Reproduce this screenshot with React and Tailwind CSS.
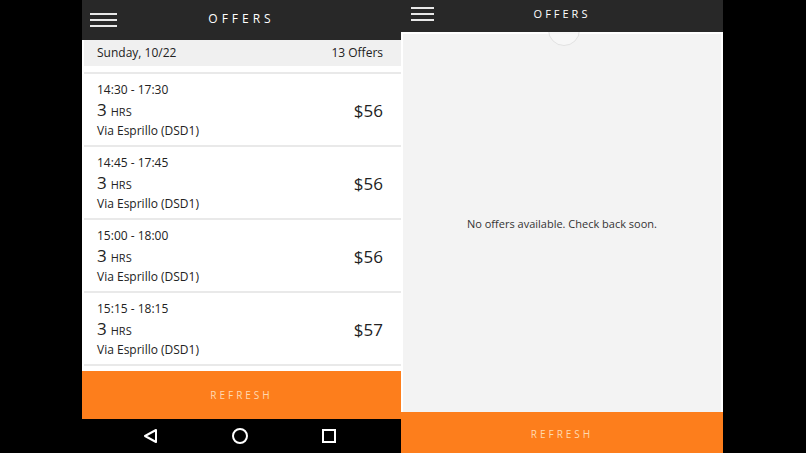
const offers = [
    { time: '14:30 - 17:30', hrs: '3', place: 'Via Esprillo (DSD1)', price: '$56' },
    { time: '14:45 - 17:45', hrs: '3', place: 'Via Esprillo (DSD1)', price: '$56' },
    { time: '15:00 - 18:00', hrs: '3', place: 'Via Esprillo (DSD1)', price: '$56' },
    { time: '15:15 - 18:15', hrs: '3', place: 'Via Esprillo (DSD1)', price: '$57' },
];

function Burger({ width }) {
    return (
        <div className="flex flex-col gap-[4px]" style={{ width }}>
            <div className="h-[2px] bg-[#e8e8e8]" />
            <div className="h-[2px] bg-[#e8e8e8]" />
            <div className="h-[2px] bg-[#e8e8e8]" />
        </div>
    );
}

function OfferCard({ offer }) {
    return (
        <div className="bg-white pl-[13px] pr-[18px] pt-[8px] pb-[5px] text-[#222]">
            <div className="text-[12px] leading-[16px]">{offer.time}</div>
            <div className="mt-[2px] flex items-center justify-between h-[22px]">
                <div className="leading-[22px]">
                    <span className="text-[17px]">{offer.hrs}</span>
                    <span className="text-[11px] ml-[4px]">HRS</span>
                </div>
                <div className="text-[17px]">{offer.price}</div>
            </div>
            <div className="text-[12px] leading-[18px]">{offer.place}</div>
        </div>
    );
}

function OffersList() {
    return (
        <div className="w-[319px] h-[453px] flex flex-col">
            <div className="h-[40px] bg-[#282828] flex items-center px-[8px] relative">
                <Burger width={27} />
                <div className="absolute left-0 right-0 top-[10px] text-center text-white text-[12px] tracking-[4px] pointer-events-none">OFFERS</div>
            </div>
            <div className="h-[26px] bg-[#f0f0f0] flex items-center justify-between pl-[13px] pr-[18px] text-[12px] text-[#222] border-l-2 border-white">
                <span>Sunday, 10/22</span>
                <span>13 Offers</span>
            </div>
            <div className="h-[305px] bg-[#e9e9e9] flex flex-col gap-[2px] overflow-hidden border-l-2 border-white">
                <div className="h-[6px] bg-white shrink-0" />
                {offers.map((o) => (
                    <OfferCard key={o.time} offer={o} />
                ))}
                <div className="h-[10px] bg-white shrink-0" />
            </div>
            <div className="h-[48px] bg-[#fd7e1c] flex items-center justify-center text-[#ffd9b0] text-[10px] tracking-[3px]">REFRESH</div>
            <div className="h-[34px] bg-black flex items-center justify-between pl-[60px] pr-[63px]">
                <svg width="18" height="18" viewBox="0 0 18 18">
                    <path d="M14 3 L3 9 L14 15 Z" fill="none" stroke="#fff" strokeWidth="2" strokeLinejoin="round" />
                </svg>
                <svg width="18" height="18" viewBox="0 0 18 18">
                    <circle cx="9" cy="9" r="7" fill="none" stroke="#fff" strokeWidth="2" />
                </svg>
                <svg width="18" height="18" viewBox="0 0 18 18">
                    <rect x="3" y="3" width="12" height="12" fill="none" stroke="#fff" strokeWidth="2" />
                </svg>
            </div>
        </div>
    );
}

function EmptyOffers() {
    return (
        <div className="w-[322px] h-[453px] flex flex-col">
            <div className="h-[32px] bg-[#282828] flex items-center px-[10px] relative z-10">
                <div className="mt-[-4px]">
                    <Burger width={23} />
                </div>
                <div className="absolute left-0 right-0 top-[6px] text-center text-white text-[11px] tracking-[3px] pointer-events-none">OFFERS</div>
            </div>
            <div className="h-[380px] bg-[#f3f3f3] border-t-2 border-x-2 border-white relative flex items-center justify-center">
                <div className="absolute left-[145px] top-[-20px] w-[32px] h-[32px] rounded-full bg-[#f7f7f7] border border-[#e2e2e2]" />
                <div className="text-[11px] text-[#333] mt-[2px]">No offers available. Check back soon.</div>
            </div>
            <div className="h-[41px] bg-[#fd7e1c] flex items-center justify-center pt-[3px] text-[#ffd9b0] text-[10px] tracking-[3px]">REFRESH</div>
        </div>
    );
}

export default function App() {
    return (
        <div className="w-[806px] h-[453px] bg-black flex overflow-hidden" style={{ fontFamily: '"Open Sans", "Noto Sans", sans-serif' }}>
            <div className="w-[82px] shrink-0" />
            <OffersList />
            <EmptyOffers />
        </div>
    );
}
